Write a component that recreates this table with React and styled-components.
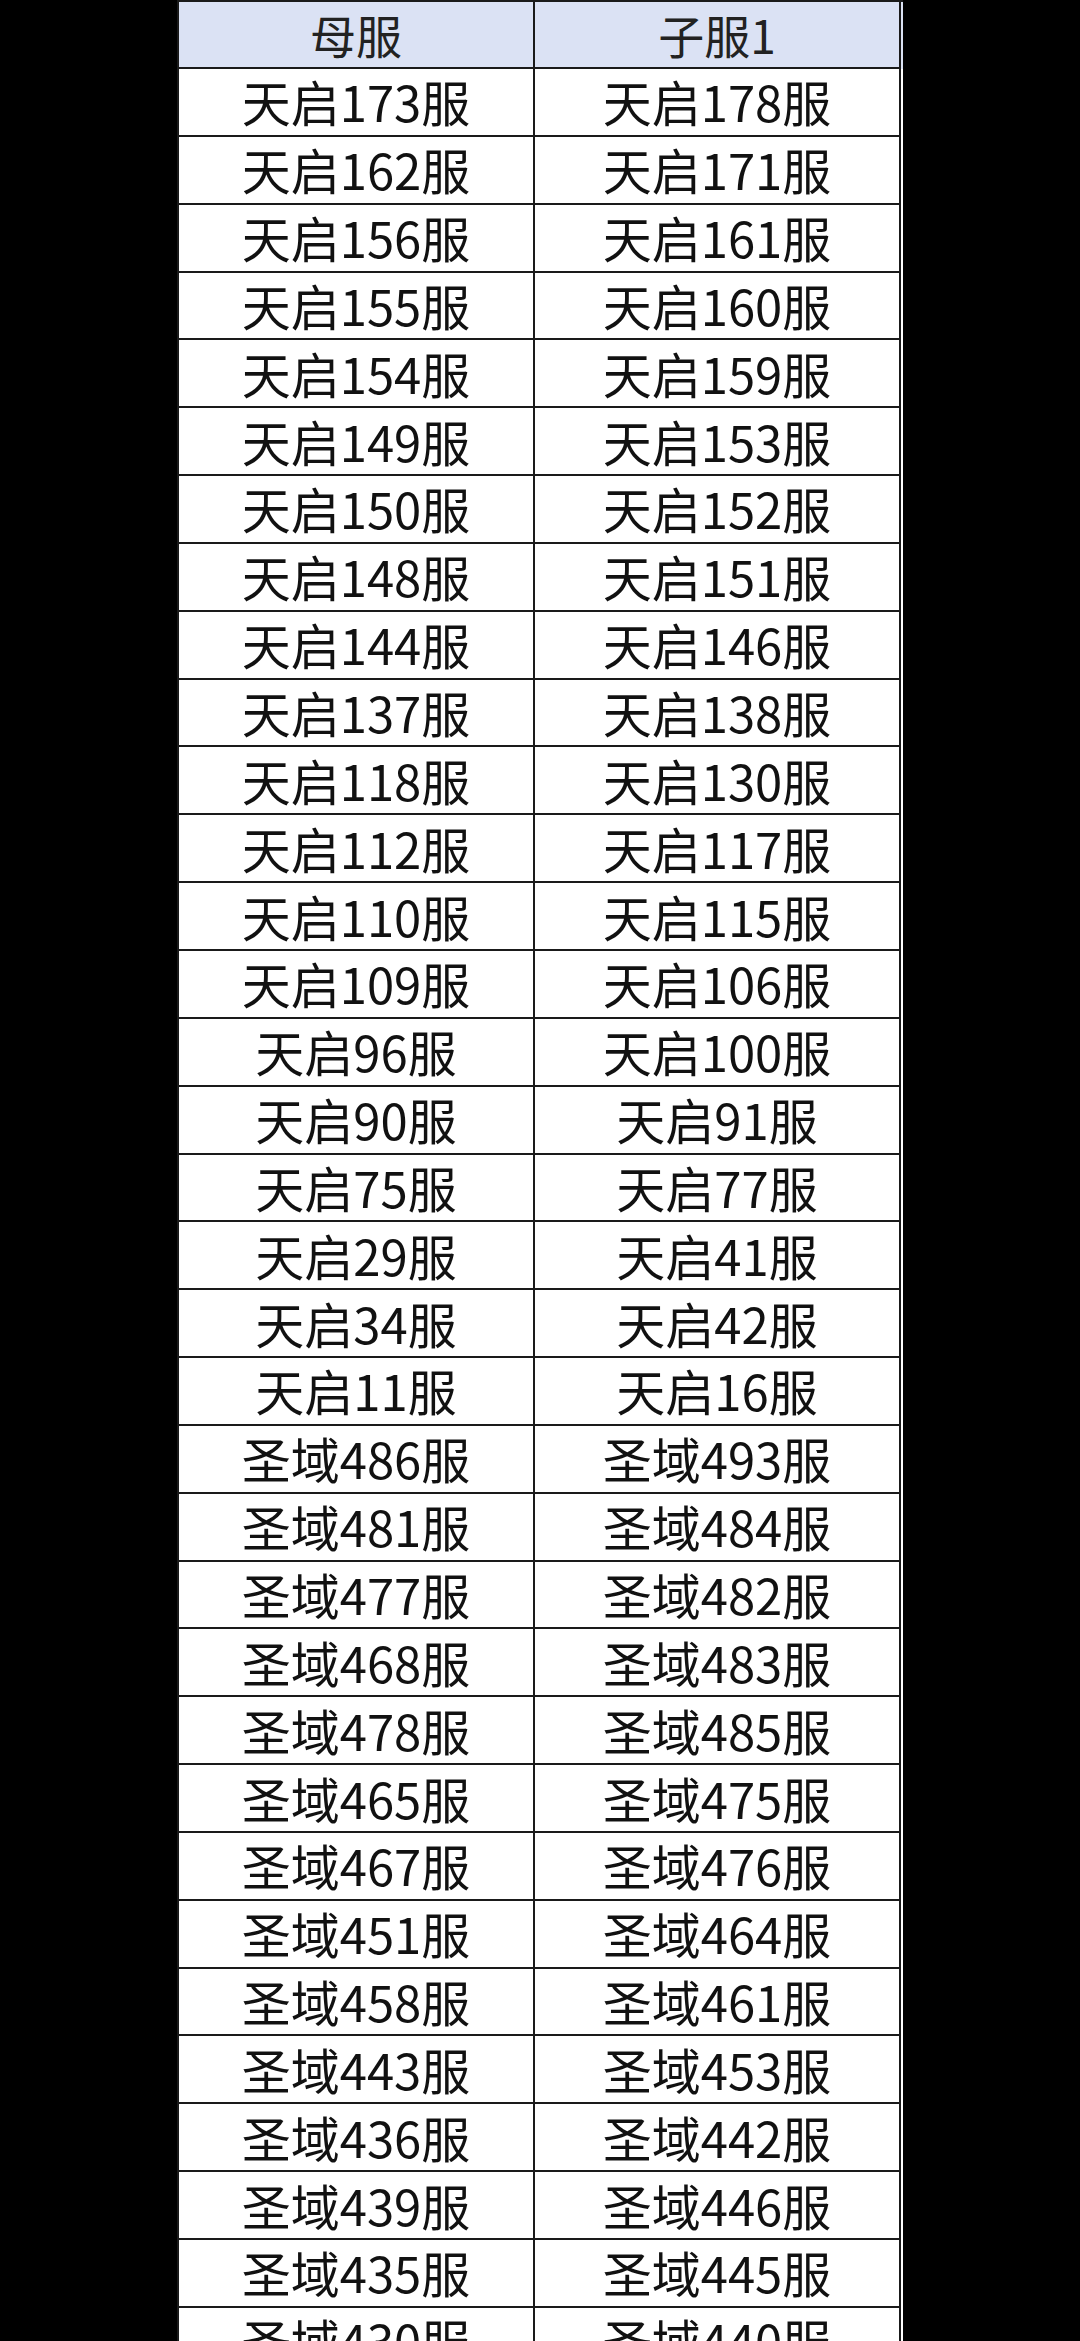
import React from "react";
import styled, { createGlobalStyle } from "styled-components";

const Global = createGlobalStyle`
  html, body { margin: 0; padding: 0; background: #000; }
  body { font-family: "Noto Sans CJK SC", "Noto Sans", sans-serif; }
`;

const Page = styled.div`
  width: 1080px;
  height: 2341px;
  overflow: hidden;
  background: #000;
`;

const Table = styled.div`
  width: 724px;
  margin: 0 auto;
  background: #fff;
  border-top: 2px solid #1a1a1a;
  border-left: 2px solid #1a1a1a;
  display: flex;
  flex-direction: column;
`;

const Row = styled.div`
  display: grid;
  grid-template-columns: 356px 366px;
  height: ${(p) => (p.$header ? "67px" : "67.85px")};
  box-sizing: border-box;
  flex-shrink: 0;
  background: ${(p) => (p.$header ? "#dbe2f4" : "#fff")};
`;

const Cell = styled.div`
  box-sizing: border-box;
  border-right: 2px solid #1a1a1a;
  border-bottom: 2px solid #1a1a1a;
  display: flex;
  align-items: center;
  justify-content: center;
  font-size: ${(p) => (p.$header ? "46px" : "49px")};
  line-height: 1;
  color: ${(p) => (p.$header ? "#222" : "#111")};
  white-space: nowrap;
  padding-bottom: 2px;
`;

const data = [
  ["天启173服", "天启178服"],
  ["天启162服", "天启171服"],
  ["天启156服", "天启161服"],
  ["天启155服", "天启160服"],
  ["天启154服", "天启159服"],
  ["天启149服", "天启153服"],
  ["天启150服", "天启152服"],
  ["天启148服", "天启151服"],
  ["天启144服", "天启146服"],
  ["天启137服", "天启138服"],
  ["天启118服", "天启130服"],
  ["天启112服", "天启117服"],
  ["天启110服", "天启115服"],
  ["天启109服", "天启106服"],
  ["天启96服", "天启100服"],
  ["天启90服", "天启91服"],
  ["天启75服", "天启77服"],
  ["天启29服", "天启41服"],
  ["天启34服", "天启42服"],
  ["天启11服", "天启16服"],
  ["圣域486服", "圣域493服"],
  ["圣域481服", "圣域484服"],
  ["圣域477服", "圣域482服"],
  ["圣域468服", "圣域483服"],
  ["圣域478服", "圣域485服"],
  ["圣域465服", "圣域475服"],
  ["圣域467服", "圣域476服"],
  ["圣域451服", "圣域464服"],
  ["圣域458服", "圣域461服"],
  ["圣域443服", "圣域453服"],
  ["圣域436服", "圣域442服"],
  ["圣域439服", "圣域446服"],
  ["圣域435服", "圣域445服"],
  ["圣域430服", "圣域440服"],
];

export default function App() {
  return (
    <Page>
      <Global />
      <Table>
        <Row $header>
          <Cell $header>母服</Cell>
          <Cell $header>子服1</Cell>
        </Row>
        {data.map(([a, b], i) => (
          <Row key={i}>
            <Cell>{a}</Cell>
            <Cell>{b}</Cell>
          </Row>
        ))}
      </Table>
    </Page>
  );
}
